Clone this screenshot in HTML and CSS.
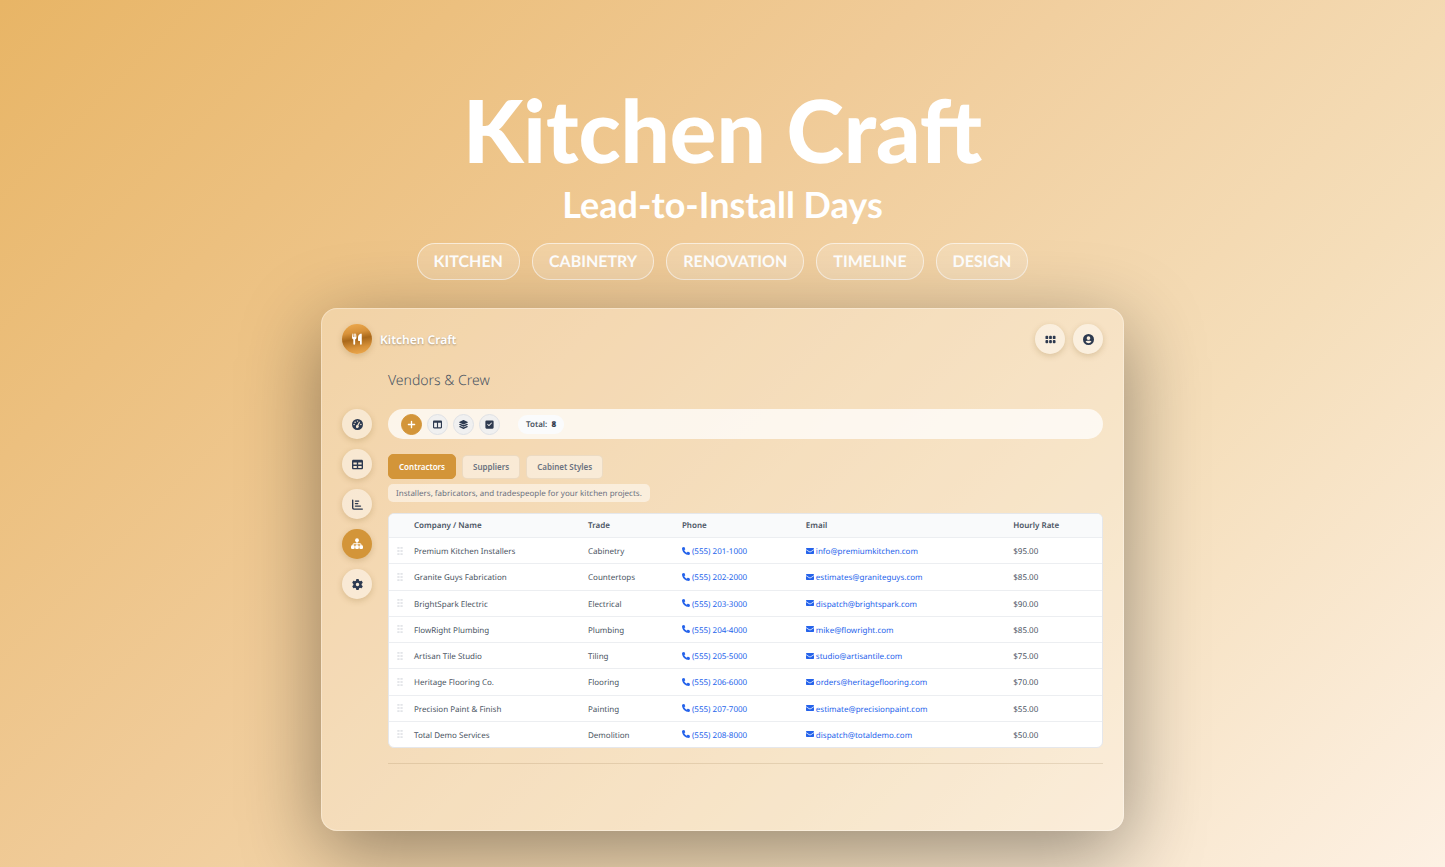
FILE: index.html
```html
<!DOCTYPE html>
<html lang="en">
<head>
<meta charset="utf-8">
<meta name="viewport" content="width=device-width, initial-scale=1">
<title>Kitchen Craft</title>
<link rel="stylesheet" href="styles.css">
</head>
<body>
<svg class="sprite" aria-hidden="true">
  <symbol id="i-utensils" viewBox="0 0 24 24"><path d="M3 1.5Q3.7.8 4.4 1.5V8H5.6V1.5Q6.500 .8 7.400 1.500V8H8.600V1.500Q9.300.8 10 1.500L11 8.500Q11 12 8.300 13V22Q8.300 23.500 6.500 23.500T4.700 22V13Q2 12 2 8.500ZM20 1Q21.500 1 21.500 2.500V22Q21.500 23.500 19.800 23.500T18 22V16H15.500Q14 16 14 14.500V9Q14 3 20 1Z"/></symbol>
  <symbol id="i-grid" viewBox="0 0 24 24"><rect x="1" y="4" width="6" height="7" rx="2"/><rect x="9" y="4" width="6" height="7" rx="2"/><rect x="17" y="4" width="6" height="7" rx="2"/><rect x="1" y="13" width="6" height="7" rx="2"/><rect x="9" y="13" width="6" height="7" rx="2"/><rect x="17" y="13" width="6" height="7" rx="2"/></symbol>
  <symbol id="i-user" viewBox="0 0 24 24"><path fill-rule="evenodd" d="M12 0a12 12 0 1 0 0 24 12 12 0 0 0 0-24zM12 5a4 4 0 1 1 0 8 4 4 0 0 1 0-8zM5.500 16.500Q7 14.800 9 14.800H15Q17 14.800 18.500 16.500Q16 20 12 20T5.500 16.500z"/></symbol>
  <symbol id="i-gauge" viewBox="0 0 24 24"><path fill-rule="evenodd" d="M12 0a12 12 0 1 0 0 24 12 12 0 0 0 0-24zM12 3a1.600 1.600 0 1 1 0 3.200 1.600 1.600 0 0 1 0-3.200zM6.800 5.500a1.600 1.600 0 1 1 0 3.200 1.600 1.600 0 0 1 0-3.200zM4.600 10.600a1.600 1.600 0 1 1 0 3.200 1.600 1.600 0 0 1 0-3.200zM19.400 10.600a1.600 1.600 0 1 1 0 3.200 1.600 1.600 0 0 1 0-3.200zM15.400 6Q16.200 5.400 17 6.200 17.500 6.800 17.200 7.500L14 14.300A3.200 3.200 0 1 1 11.500 13.300Z"/></symbol>
  <symbol id="i-table" viewBox="0 0 512 512"><path d="M64 256V160H224v96H64zm0 64H224v96H64V320zm224 96V320H448v96H288zM448 256H288V160H448v96zM64 32C28.700 32 0 60.700 0 96V416c0 35.300 28.700 64 64 64H448c35.300 0 64-28.700 64-64V96c0-35.300-28.700-64-64-64H64z"/></symbol>
  <symbol id="i-chart" viewBox="0 0 24 24"><path d="M1.500 1Q3 1 3 2.500V19Q3 20.500 4.500 20.500H22.500Q24 20.500 24 22T22.500 23.500H4Q0 23.500 0 19.500V2.500Q0 1 1.500 1Z"/><rect x="6" y="3" width="10" height="3" rx="1.500"/><rect x="6" y="8.500" width="8" height="3" rx="1.500"/><rect x="6" y="14" width="14" height="3" rx="1.500"/></symbol>
  <symbol id="i-sitemap" viewBox="0 0 24 24"><circle cx="12" cy="4.500" r="3.800"/><path d="M11 7H13V10.500H18Q21 10.500 21 13.500V16H19V13.500Q19 12.500 18 12.500H13V16H11V12.500H6Q5 12.500 5 13.500V16H3V13.500Q3 10.500 6 10.500H11Z"/><rect x="0" y="14.500" width="7.400" height="7.500" rx="2.500"/><rect x="8.300" y="14.500" width="7.400" height="7.500" rx="2.500"/><rect x="16.600" y="14.500" width="7.400" height="7.500" rx="2.500"/></symbol>
  <symbol id="i-gear" viewBox="0 0 512 512"><path d="M495.900 166.600c3.200 8.700 .5 18.400-6.400 24.600l-43.300 39.400c1.100 8.300 1.700 16.800 1.700 25.400s-.6 17.100-1.700 25.400l43.300 39.400c6.900 6.200 9.600 15.900 6.400 24.600c-4.400 11.900-9.700 23.300-15.800 34.300l-4.700 8.100c-6.600 11-14 21.400-22.100 31.200c-5.900 7.200-15.700 9.600-24.500 6.800l-55.700-17.700c-13.400 10.300-28.200 18.900-44 25.400l-12.500 57.100c-2 9.100-9 16.300-18.200 17.800c-13.800 2.300-28 3.500-42.500 3.500s-28.700-1.200-42.500-3.500c-9.200-1.500-16.200-8.700-18.200-17.800l-12.500-57.100c-15.800-6.500-30.600-15.100-44-25.400L83.100 425.900c-8.800 2.800-18.600 .3-24.500-6.800c-8.100-9.800-15.500-20.200-22.100-31.200l-4.700-8.100c-6.100-11-11.400-22.400-15.800-34.300c-3.200-8.700-.5-18.400 6.400-24.600l43.300-39.400C64.600 273.100 64 264.600 64 256s.6-17.100 1.700-25.400L22.400 191.200c-6.900-6.200-9.600-15.900-6.400-24.600c4.400-11.900 9.700-23.300 15.800-34.300l4.700-8.100c6.600-11 14-21.400 22.100-31.200c5.900-7.200 15.700-9.600 24.500-6.800l55.700 17.700c13.400-10.300 28.200-18.900 44-25.400l12.500-57.100c2-9.100 9-16.300 18.200-17.800C227.300 1.200 241.500 0 256 0s28.700 1.200 42.500 3.500c9.200 1.500 16.200 8.700 18.200 17.800l12.500 57.100c15.800 6.500 30.600 15.100 44 25.400l55.700-17.700c8.800-2.800 18.600-.3 24.500 6.800c8.100 9.800 15.500 20.200 22.100 31.200l4.700 8.100c6.100 11 11.400 22.400 15.800 34.300zM256 336a80 80 0 1 0 0-160 80 80 0 1 0 0 160z"/></symbol>
  <symbol id="i-plus" viewBox="0 0 24 24"><path d="M12 2Q13.800 2 13.800 3.500V10.200H20.500Q22 10.200 22 12T20.500 13.800H13.800V20.500Q13.800 22 12 22T10.200 20.500V13.800H3.500Q2 13.800 2 12T3.500 10.200H10.200V3.500Q10.200 2 12 2Z"/></symbol>
  <symbol id="i-columns" viewBox="0 0 512 512"><path d="M0 96C0 60.700 28.700 32 64 32H448c35.300 0 64 28.700 64 64V416c0 35.300-28.700 64-64 64H64c-35.300 0-64-28.700-64-64V96zm64 64V416H224V160H64zm384 0H288V416H448V160z"/></symbol>
  <symbol id="i-layers" viewBox="0 0 512 512"><path d="M12.400 148l233 105.700c6.800 3 14.500 3 21.200 0L499.600 148c16.500-7.500 16.500-32.500 0-40L266.600 2.300a25.600 25.600 0 0 0-21.200 0L12.400 108c-16.500 7.500-16.500 32.500 0 40zm487.200 88.300L441.500 210l-161.600 73.200c-7.600 3.400-15.600 5.200-23.900 5.200s-16.300-1.800-23.900-5.200L70.500 210l-58.100 26.300c-16.500 7.500-16.500 32.500 0 40l233 105.600c6.800 3 14.500 3 21.200 0l233-105.600c16.500-7.500 16.500-32.500 0-40zm0 127.800l-57.900-26.200-161.800 73.300c-7.600 3.400-15.600 5.200-23.900 5.200s-16.300-1.800-23.900-5.200L70.300 337.900l-57.900 26.200c-16.500 7.500-16.500 32.500 0 40l233 105.600c6.800 3 14.500 3 21.200 0l233-105.600c16.500-7.500 16.500-32.500 0-40z"/></symbol>
  <symbol id="i-check" viewBox="0 0 24 24"><path fill-rule="evenodd" d="M4 1H20Q23 1 23 4V20Q23 23 20 23H4Q1 23 1 20V4Q1 1 4 1ZM18.200 8.800Q18.800 8 18 7.200 17.200 6.500 16.400 7.200L10.500 13.200 7.800 10.500Q7 9.800 6.200 10.500 5.500 11.300 6.200 12.100L9.700 15.700Q10.500 16.400 11.300 15.700Z"/></symbol>
  <symbol id="i-grip" viewBox="0 0 12 18"><rect x="0" y="0" width="5" height="4"/><rect x="7" y="0" width="5" height="4"/><rect x="0" y="7" width="5" height="4"/><rect x="7" y="7" width="5" height="4"/><rect x="0" y="14" width="5" height="4"/><rect x="7" y="14" width="5" height="4"/></symbol>
  <symbol id="i-phone" viewBox="0 0 512 512"><path d="M164.900 24.600c-7.700-18.600-28-28.500-47.400-23.200l-88 24C12.100 30.200 0 46 0 64C0 311.400 200.600 512 448 512c18 0 33.800-12.100 38.600-29.500l24-88c5.300-19.400-4.600-39.700-23.200-47.400l-96-40c-16.300-6.800-35.200-2.100-46.300 11.600L304.700 368C234.300 334.700 177.300 277.700 144 207.300L193.300 167c13.700-11.200 18.400-30 11.600-46.300l-40-96z"/></symbol>
  <symbol id="i-mail" viewBox="0 0 24 24"><path d="M2 3H22Q24 3 24 5V6.500L12 14 0 6.500V5Q0 3 2 3ZM0 9L12 16.500 24 9V19Q24 21 22 21H2Q0 21 0 19Z"/></symbol>
</svg>

<main class="page">
  <header class="hero">
    <h1 class="hero-title">Kitchen Craft</h1>
    <p class="hero-subtitle">Lead-to-Install Days</p>
    <ul class="tags">
      <li class="tag">KITCHEN</li>
      <li class="tag">CABINETRY</li>
      <li class="tag">RENOVATION</li>
      <li class="tag">TIMELINE</li>
      <li class="tag">DESIGN</li>
    </ul>
  </header>

  <section class="app">
    <div class="topbar">
      <span class="logo"><svg class="icon icon-lg"><use href="#i-utensils"/></svg></span>
      <span class="brand">Kitchen Craft</span>
      <button class="round" type="button" aria-label="Apps"><svg class="icon"><use href="#i-grid"/></svg></button>
      <button class="round" type="button" aria-label="Account"><svg class="icon"><use href="#i-user"/></svg></button>
    </div>
    <h2 class="page-title">Vendors &amp; Crew</h2>
    <div class="body">
      <nav class="sidebar">
        <button class="round" type="button" aria-label="Dashboard"><svg class="icon"><use href="#i-gauge"/></svg></button>
        <button class="round" type="button" aria-label="Tables"><svg class="icon"><use href="#i-table"/></svg></button>
        <button class="round" type="button" aria-label="Reports"><svg class="icon"><use href="#i-chart"/></svg></button>
        <button class="round round-active" type="button" aria-label="Vendors"><svg class="icon icon-lg"><use href="#i-sitemap"/></svg></button>
        <button class="round" type="button" aria-label="Settings"><svg class="icon"><use href="#i-gear"/></svg></button>
      </nav>
      <div class="content">
        <div class="toolbar">
          <button class="tool tool-primary" type="button" aria-label="Add"><svg class="icon icon-sm"><use href="#i-plus"/></svg></button>
          <button class="tool" type="button" aria-label="Columns"><svg class="icon icon-sm"><use href="#i-columns"/></svg></button>
          <button class="tool" type="button" aria-label="Group"><svg class="icon icon-sm"><use href="#i-layers"/></svg></button>
          <button class="tool" type="button" aria-label="Select"><svg class="icon icon-sm"><use href="#i-check"/></svg></button>
          <span class="total">Total: <b class="total-value">8</b></span>
        </div>
        <div class="tabs">
          <button class="tab tab-active" type="button">Contractors</button>
          <button class="tab" type="button">Suppliers</button>
          <button class="tab" type="button">Cabinet Styles</button>
        </div>
        <p class="hint">Installers, fabricators, and tradespeople for your kitchen projects.</p>
        <div class="table-card">
          <table class="table">
            <colgroup><col class="c-grip"><col class="c-name"><col class="c-trade"><col class="c-phone"><col class="c-email"><col class="c-rate"></colgroup>
            <thead>
              <tr><th></th><th>Company / Name</th><th>Trade</th><th>Phone</th><th>Email</th><th>Hourly Rate</th></tr>
            </thead>
            <tbody>
              <tr><td><svg class="grip"><use href="#i-grip"/></svg></td><td>Premium Kitchen Installers</td><td>Cabinetry</td><td><a class="link" href="tel:5552011000"><svg class="link-icon"><use href="#i-phone"/></svg>(555) 201-1000</a></td><td><a class="link" href="mailto:info@premiumkitchen.com"><svg class="link-icon"><use href="#i-mail"/></svg>info@premiumkitchen.com</a></td><td>$95.00</td></tr>
              <tr><td><svg class="grip"><use href="#i-grip"/></svg></td><td>Granite Guys Fabrication</td><td>Countertops</td><td><a class="link" href="tel:5552022000"><svg class="link-icon"><use href="#i-phone"/></svg>(555) 202-2000</a></td><td><a class="link" href="mailto:estimates@graniteguys.com"><svg class="link-icon"><use href="#i-mail"/></svg>estimates@graniteguys.com</a></td><td>$85.00</td></tr>
              <tr><td><svg class="grip"><use href="#i-grip"/></svg></td><td>BrightSpark Electric</td><td>Electrical</td><td><a class="link" href="tel:5552033000"><svg class="link-icon"><use href="#i-phone"/></svg>(555) 203-3000</a></td><td><a class="link" href="mailto:dispatch@brightspark.com"><svg class="link-icon"><use href="#i-mail"/></svg>dispatch@brightspark.com</a></td><td>$90.00</td></tr>
              <tr><td><svg class="grip"><use href="#i-grip"/></svg></td><td>FlowRight Plumbing</td><td>Plumbing</td><td><a class="link" href="tel:5552044000"><svg class="link-icon"><use href="#i-phone"/></svg>(555) 204-4000</a></td><td><a class="link" href="mailto:mike@flowright.com"><svg class="link-icon"><use href="#i-mail"/></svg>mike@flowright.com</a></td><td>$85.00</td></tr>
              <tr><td><svg class="grip"><use href="#i-grip"/></svg></td><td>Artisan Tile Studio</td><td>Tiling</td><td><a class="link" href="tel:5552055000"><svg class="link-icon"><use href="#i-phone"/></svg>(555) 205-5000</a></td><td><a class="link" href="mailto:studio@artisantile.com"><svg class="link-icon"><use href="#i-mail"/></svg>studio@artisantile.com</a></td><td>$75.00</td></tr>
              <tr><td><svg class="grip"><use href="#i-grip"/></svg></td><td>Heritage Flooring Co.</td><td>Flooring</td><td><a class="link" href="tel:5552066000"><svg class="link-icon"><use href="#i-phone"/></svg>(555) 206-6000</a></td><td><a class="link" href="mailto:orders@heritageflooring.com"><svg class="link-icon"><use href="#i-mail"/></svg>orders@heritageflooring.com</a></td><td>$70.00</td></tr>
              <tr><td><svg class="grip"><use href="#i-grip"/></svg></td><td>Precision Paint &amp; Finish</td><td>Painting</td><td><a class="link" href="tel:5552077000"><svg class="link-icon"><use href="#i-phone"/></svg>(555) 207-7000</a></td><td><a class="link" href="mailto:estimate@precisionpaint.com"><svg class="link-icon"><use href="#i-mail"/></svg>estimate@precisionpaint.com</a></td><td>$55.00</td></tr>
              <tr><td><svg class="grip"><use href="#i-grip"/></svg></td><td>Total Demo Services</td><td>Demolition</td><td><a class="link" href="tel:5552088000"><svg class="link-icon"><use href="#i-phone"/></svg>(555) 208-8000</a></td><td><a class="link" href="mailto:dispatch@totaldemo.com"><svg class="link-icon"><use href="#i-mail"/></svg>dispatch@totaldemo.com</a></td><td>$50.00</td></tr>
            </tbody>
          </table>
        </div>
        <hr class="divider">
      </div>
    </div>
  </section>
</main>
</body>
</html>
```
FILE: styles.css
```css
* { box-sizing: border-box; }

body {
  margin: 0;
  min-height: 100vh;
  overflow-x: hidden;
  background: linear-gradient(135deg, #e8b566 0%, #f0cb98 40%, #f5deba 70%, #fdf1e4 100%);
  font-family: "Segoe UI", "Noto Sans", "Open Sans", sans-serif;
  font-size: 8px;
  color: #4b5563;
  text-rendering: geometricPrecision;
}

button {
  font: inherit;
  color: inherit;
  border: 0;
  padding: 0;
  cursor: pointer;
}

.sprite { display: none; }

.page {
  display: flex;
  flex-direction: column;
  align-items: center;
  padding: 80px 24px 35px;
}

.hero {
  display: flex;
  flex-direction: column;
  align-items: center;
  color: #fff;
  font-family: "Century Gothic", Lato, sans-serif;
  font-weight: 700;
  text-align: center;
}

.hero-title {
  margin: 0;
  font-size: 87px;
  line-height: 100px;
  font-weight: 900;
}

.hero-subtitle {
  margin: 0;
  font-size: 36px;
  line-height: 48px;
}

.tags {
  display: flex;
  flex-wrap: wrap;
  justify-content: center;
  gap: 12px;
  margin: 15px 0 28px;
  padding: 0;
  list-style: none;
}

.tag {
  padding: 1px 16px 0;
  border: 1px solid rgba(255, 255, 255, .6);
  border-radius: 18px;
  background: rgba(255, 255, 255, .18);
  font-size: 16px;
  line-height: 34px;
}

.app {
  width: 100%;
  max-width: 803px;
  padding: 15px 20px 66px;
  border: 1px solid rgba(255, 255, 255, .3);
  border-radius: 16px;
  background: rgba(255, 255, 255, .25);
  box-shadow: 0 20px 80px rgba(0, 0, 0, .4);
}

.topbar {
  display: flex;
  align-items: center;
  gap: 8px;
}

.logo,
.round {
  display: flex;
  align-items: center;
  justify-content: center;
  flex: none;
  width: 30px;
  height: 30px;
  border-radius: 50%;
  box-shadow: 0 2px 6px rgba(120, 80, 20, .22);
}

.logo {
  color: #fff;
  background: linear-gradient(170deg, #efac50 0%, #d8923a 30%, #a9681a 50%, #d8923a 75%, #efac50 100%);
}

.round {
  color: #2d3a50;
  background: rgba(255, 255, 255, .45);
}

.round-active {
  color: #fff;
  background: #d39539;
}

.brand {
  flex: 1;
  color: #fff;
  font-size: 12px;
  font-weight: 600;
  text-shadow: 0 1px 2px rgba(0, 0, 0, .3);
}

.icon {
  display: block;
  width: 11px;
  height: 11px;
  fill: currentColor;
}

.icon-sm { width: 9px; height: 9px; }
.icon-lg { width: 12px; height: 12px; }

.page-title {
  margin: 15px 0 16px 46px;
  font-size: 14px;
  line-height: 24px;
  font-weight: 300;
}

.body {
  display: grid;
  grid-template-columns: 30px minmax(0, 1fr);
  gap: 16px;
}

.sidebar {
  display: flex;
  flex-direction: column;
  gap: 10px;
}

.toolbar {
  display: flex;
  align-items: center;
  gap: 5px;
  min-height: 30px;
  padding: 0 13px;
  border-radius: 15px;
  background: rgba(255, 255, 255, .75);
}

.tool {
  display: flex;
  align-items: center;
  justify-content: center;
  width: 21px;
  height: 21px;
  border: 1px solid #dfe1e5;
  border-radius: 50%;
  background: #f0f0f0;
  color: #2d3a50;
}

.tool-primary {
  border-color: #d39539;
  background: #d39539;
  color: #fff;
}

.total {
  margin-left: 13px;
  padding: 1px 8px 0;
  border-radius: 9px;
  background: #fafbfc;
  font-weight: 600;
  line-height: 18px;
}

.total-value { margin-left: 2px; color: #374151; }

.tabs {
  display: flex;
  align-items: center;
  gap: 6px;
  margin-top: 15px;
}

.tab {
  padding: 0 10px;
  border: 1px solid rgba(160, 130, 80, .15);
  border-radius: 5px;
  background: rgba(255, 255, 255, .45);
  color: #6b7280;
  font-size: 8px;
  font-weight: 600;
  line-height: 22px;
}

.tab-active {
  border-color: #d39539;
  background: #d39539;
  color: #fff;
  line-height: 23px;
}

.hint {
  width: fit-content;
  margin: 5px 0 11px;
  padding: 1px 8px 0;
  border-radius: 5px;
  background: rgba(255, 255, 255, .5);
  color: #6b7280;
  line-height: 17px;
}

.table-card {
  overflow: hidden;
  border: 1px solid #e5e7eb;
  border-radius: 6px;
  background: #fff;
}

.table {
  width: 100%;
  height: 233px;
  border-collapse: collapse;
  table-layout: fixed;
  font-size: 8px;
  line-height: 12px;
  text-align: left;
}

.c-grip { width: 17px; }
.c-name { width: 25%; }
.c-trade { width: 13.5%; }
.c-phone { width: 17.8%; }
.c-email { width: 29.8%; }
.c-rate { width: 13.9%; }

.table th {
  padding: 6px 8px 5px;
  background: #f9fafb;
  border-bottom: 1px solid #eceef1;
  font-weight: 600;
}

.table td {
  padding: 8px 8px 5px;
  border-bottom: 1px solid #eceef1;
}

.table tr:last-child td { border-bottom: 0; }

.grip {
  display: block;
  width: 6px;
  height: 8px;
  margin-bottom: 3px;
  fill: #e2e4e8;
}

.link {
  display: flex;
  align-items: center;
  gap: 2px;
  color: #2563eb;
  text-decoration: none;
}

.link-icon {
  width: 8px;
  height: 8px;
  margin-bottom: 3px;
  fill: currentColor;
}

.divider {
  height: 1px;
  margin: 15px 0 0;
  border: 0;
  background: rgba(120, 90, 40, .15);
}
```
